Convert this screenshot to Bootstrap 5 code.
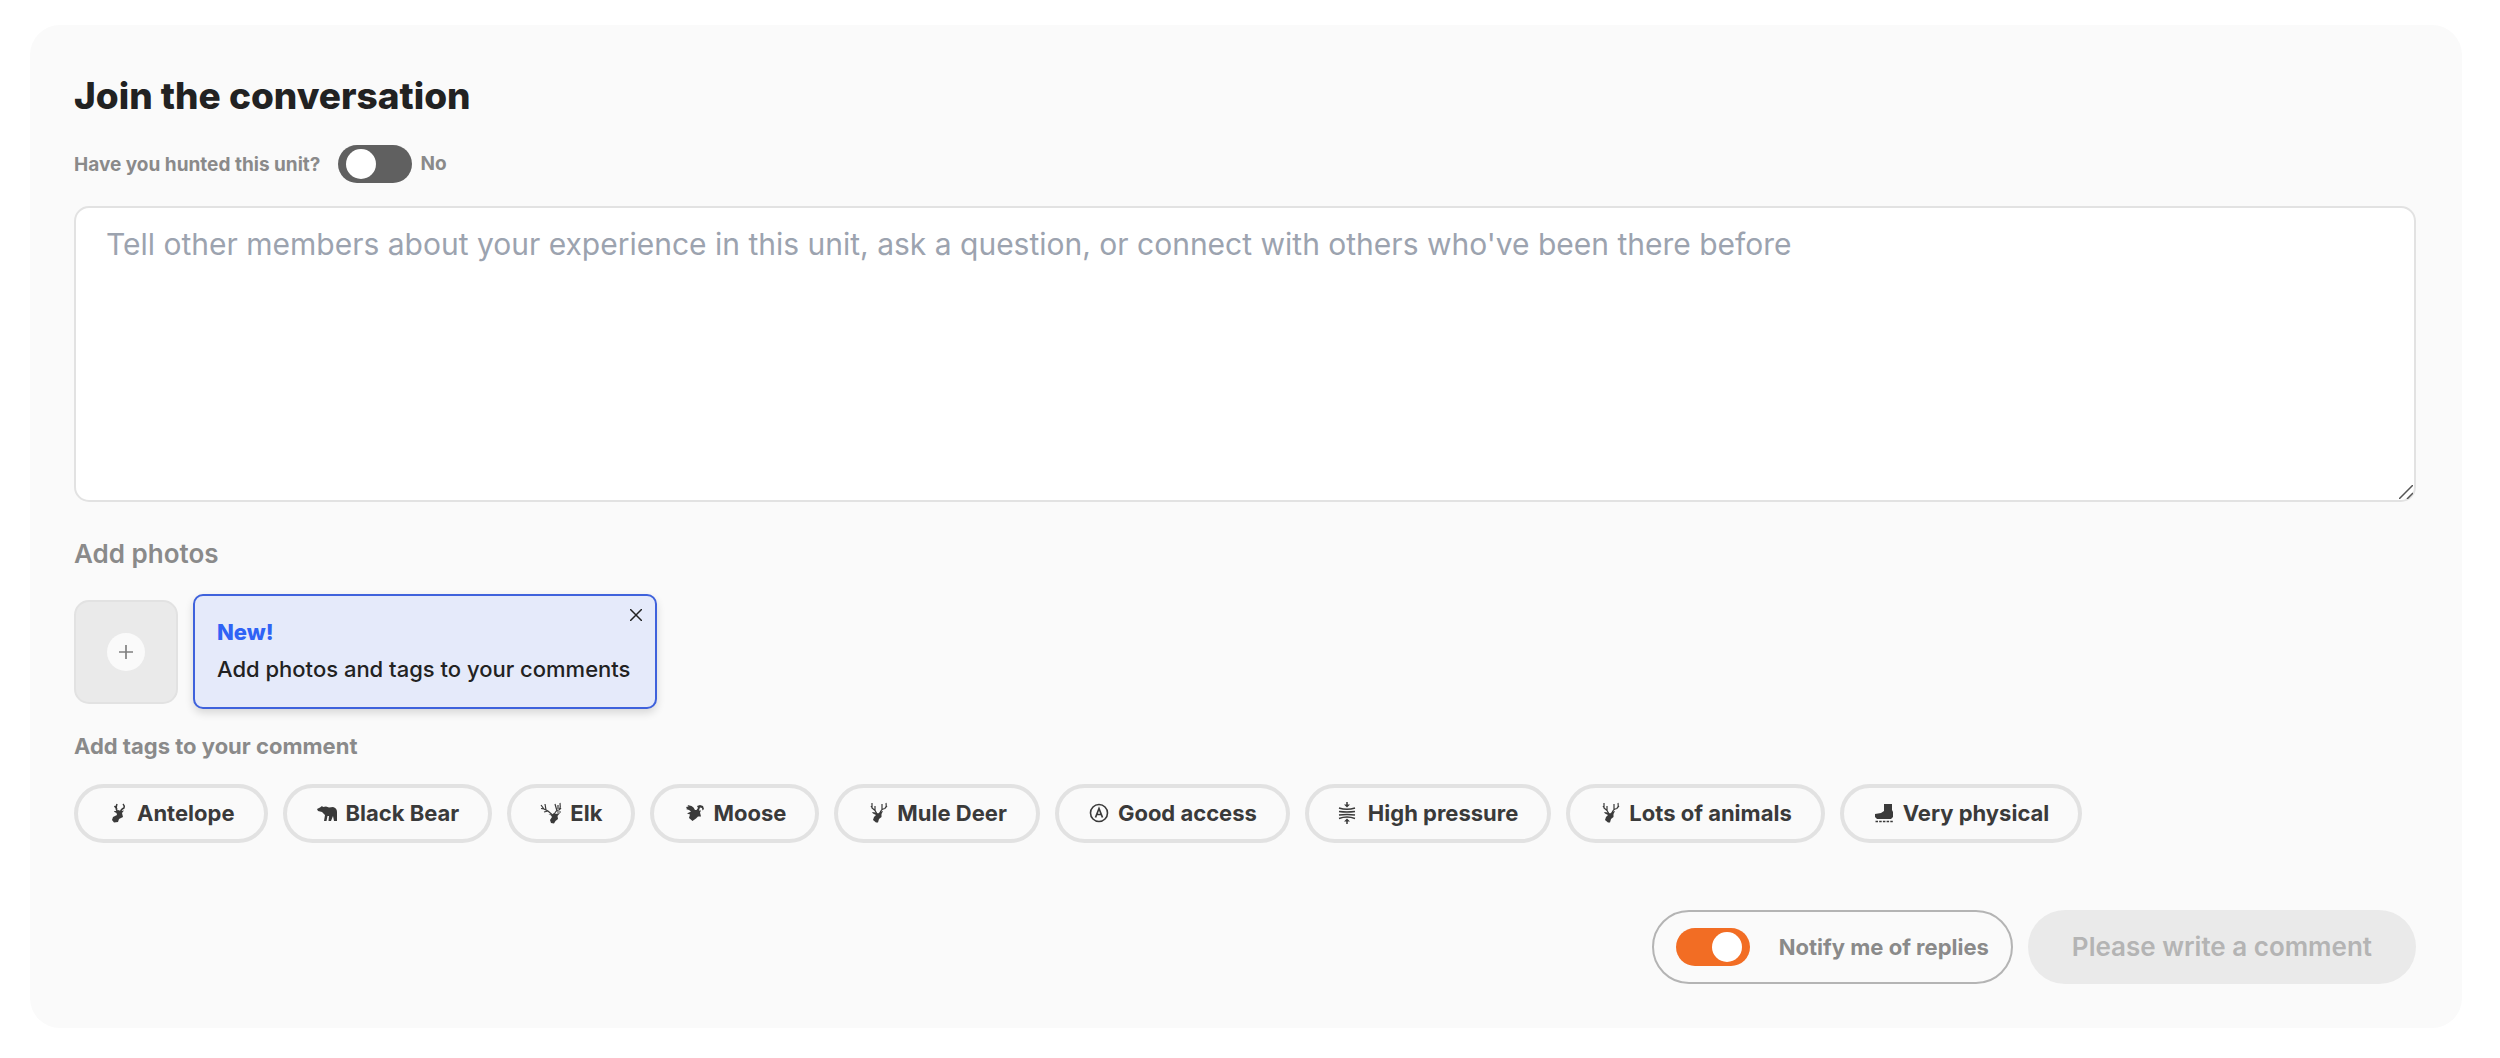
<!DOCTYPE html>
<html lang="en">
<head>
<meta charset="utf-8">
<meta name="viewport" content="width=device-width, initial-scale=1">
<title>Join the conversation</title>
<link rel="stylesheet" href="https://cdn.jsdelivr.net/npm/bootstrap@5.3.0/dist/css/bootstrap.min.css">
<style>
body { font-family: Inter, "Liberation Sans", sans-serif; font-size: 22px; line-height: 30px; color: #222; background: #fff; padding: 25px 38px 30px 30px; }
.talk-panel { background: #fafafa; border-radius: 30px; padding: 45px 46px 44px 44px; }
.talk-title { font-size: 37px; line-height: 52px; font-weight: 800; color: #222; margin-bottom: 22px; }
.muted-label { color: #8a8a8a; font-weight: 700; }
.ask-row { font-size: 19px; line-height: 38px; margin-bottom: 22px; }
.ask-row label { padding: 2px 2px 0 0; }
.switch-track { appearance: none; flex: none; width: 74px; height: 38px; margin: 0; border-radius: 19px; background: #606060; display: flex; align-items: center; padding: 0 8px; cursor: pointer; }
.switch-track::before { content: ""; width: 30px; height: 30px; border-radius: 50%; background: #fff; }
.switch-track:checked { background: #f26d24; justify-content: flex-end; }
.talk-box.form-control { height: 296px; border: 2px solid #e2e2e2; border-radius: 15px; padding: 14px 30px; font-size: 30px; line-height: 44px; background: #fff; resize: vertical; }
.talk-box.form-control::placeholder { color: #9ca3af; }
.talk-box::-webkit-resizer { display: none; }
.resize-mark { right: 3px; bottom: 3px; pointer-events: none; }
.photos-title { font-size: 26px; line-height: 36px; font-weight: 600; margin: 34px 0 22px; }
.photo-add { width: 104px; height: 104px; border: 2px solid #e2e2e2; border-radius: 15px; background: #eaeaea; padding: 0; }
.photo-add span { width: 38px; height: 38px; background: #fafafa; }
.news-box { border: 2px solid #3f62dc; border-radius: 10px; background: #e5eafa; padding: 18px 25px 19px 22px; box-shadow: 0 4px 8px rgba(0,0,0,.14); font-weight: 500; line-height: 37px; }
.news-box strong { color: #2f63f5; font-weight: 800; }
.news-close { top: 10px; right: 10px; width: 18px; height: 18px; line-height: 0; border: 0; background: none; padding: 0; }
.tags-title { font-size: 22px; line-height: 30px; margin: 22px 0 23px; }
.tag-pill { height: 59px; border: 4px solid #e2e2e2; border-radius: 30px; background: #fafafa; color: #3a3a3a; font-weight: 700; font-size: 22px; padding: 0 29px 2px; }
.tag-pill svg { width: 24px; height: 24px; margin-right: 6px; }
.gap-15 { gap: 15px; }
.foot-row { margin-top: 67px; }
.notify-box { height: 74px; border: 2px solid #b4b4b4; border-radius: 37px; padding: 0 22px; gap: 29px; }
.send-btn { height: 74px; border: 0; border-radius: 37px; background: #eaeaea; color: #b4b4b4; font-weight: 600; font-size: 26px; padding: 0 44px; }
</style>
<script src="https://cdn.jsdelivr.net/npm/bootstrap@5.3.0/dist/js/bootstrap.bundle.min.js"></script>
</head>
<body>
<svg class="d-none">
<symbol id="antelope" viewBox="0 0 24 24"><path d="M11 11Q8 8 10 3M10 8 7.500 5M13.500 11Q14 8 17 7 18 5 16 3" fill="none" stroke="currentColor" stroke-width="1.500"/><path d="m7 10 3 0 1-1 3 1 3-.500-2 2.500 1 4-4 2-1 3-4 .500-2-2.500 1-3 4-2-.500-2-2-1Z" fill="currentColor"/></symbol>
<symbol id="bear" viewBox="0 0 24 24"><path d="m1 8 3-1.500L6 5l1 1 3-.500 3 1 4-.500q4 1 4 5v9h-3l-1-5-2 5h-2.500l.500-5-1.500 0-1 5H8l1-6-3-3-2-.500L2 10Z" fill="currentColor"/></symbol>
<symbol id="elk" viewBox="0 0 24 24"><path d="M12.500 14 8 10 4 8 1 4M4 8 1 7.500M6 9 5 3M8 10 4 11M14.500 13Q16 9 19 9 21 6 20 2M19 9l2-2M17 10 15 3M18 8V4M17 11l4 0" fill="none" stroke="currentColor" stroke-width="1.200"/><path d="m8.500 13 3.500.500 2-1.500 1.500 1 4.500-1-2.500 3 .500 3-2.500 2-1.500 2.500L11 22l-1-3 2-3-1-1.500Z" fill="currentColor"/></symbol>
<symbol id="moose" viewBox="0 0 24 24"><path d="m3 6 2.500-.500-1-1.500 4 1 2 1.500L12 9l1.500 0L15 7l-1-2 3-1 3 1 1 3-1.500 1.500L19 7l-2-.500-1 3 2 0-1 2 1 4-3 0-2 2-3.500 2.500-3.500-3 1-3.500-3-1 4-2-2-1.500-3-1 1-.500Z" fill="currentColor"/></symbol>
<symbol id="deer" viewBox="0 0 24 24"><path d="M10 13 8 9.500 5 7 5 2M6 8 4 5M8 9.500V5M13 12Q14 8 18 7.500 20 5 19 2M18 7l2-2M15 9V3" fill="none" stroke="currentColor" stroke-width="1.200"/><path d="m5 11 4 .500 2 1 3-2 2-.500-1.500 3 0 3-2.500 2-1 3.500H9L6 19l1-3 2-2-3-1.500Z" fill="currentColor"/></symbol>
<symbol id="access" viewBox="0 0 24 24"><circle cx="11" cy="12" r="8.500" fill="none" stroke="currentColor" stroke-width="1.600"/><path d="m7.500 16.500 3.500-9 3.500 9M9 13.500h4" fill="none" stroke="currentColor" stroke-width="1.700"/></symbol>
<symbol id="pressure" viewBox="0 0 24 24"><path d="M9 1v4M9 23v-4M1 7q8 2.500 16 0M1 10.500q8 1 16 0M1 14q8-1 16 0M1 17.500q8-3 16 0" fill="none" stroke="currentColor" stroke-width="1.500"/><path d="M6 3.500h6L9 6.500ZM6 20.500h6L9 17.500Z" fill="currentColor"/></symbol>
<symbol id="boot" viewBox="0 0 24 24"><path d="M11 3h8v6l1 2v5l-2 2H4l-2-2v-3l6-1 3-2Z" fill="currentColor"/><path d="M2.500 20.500h17.500" fill="none" stroke="currentColor" stroke-width="1.500" stroke-dasharray="2.500 1.200"/></symbol>
</svg>
<main class="talk-panel">
<h1 class="talk-title">Join the conversation</h1>
<div class="ask-row muted-label d-flex align-items-center">
<label for="hunted" class="me-3">Have you hunted this unit?</label>
<input class="switch-track me-2" type="checkbox" role="switch" id="hunted"><span>No</span>
</div>
<div class="position-relative">
<textarea class="talk-box form-control" aria-label="Comment" placeholder="Tell other members about your experience in this unit, ask a question, or connect with others who've been there before"></textarea>
<svg class="resize-mark position-absolute" width="14" height="14" viewBox="0 0 14 14" stroke="#555" stroke-width="1.500"><path d="M0 14 14 0M8 14l6-6"/></svg>
</div>
<h2 class="photos-title muted-label">Add photos</h2>
<div class="d-flex align-items-center gap-15">
<button class="photo-add d-flex align-items-center justify-content-center" type="button" aria-label="Add a photo"><span class="rounded-circle d-flex align-items-center justify-content-center"><svg width="14" height="14" viewBox="0 0 14 14" stroke="#808080" stroke-width="1.700"><path d="M7 0v14M0 7h14"/></svg></span></button>
<div class="news-box position-relative"><strong class="d-block">New!</strong>Add photos and tags to your comments
<button class="news-close position-absolute" type="button" aria-label="Close"><svg width="12" height="12" viewBox="0 0 12 12" stroke="#222" stroke-width="1.500"><path d="m0 0 12 12M12 0 0 12"/></svg></button></div>
</div>
<h3 class="tags-title muted-label">Add tags to your comment</h3>
<div class="d-flex flex-wrap gap-15">
<button class="tag-pill d-flex align-items-center" type="button"><svg><use href="#antelope"/></svg>Antelope</button>
<button class="tag-pill d-flex align-items-center" type="button"><svg><use href="#bear"/></svg>Black Bear</button>
<button class="tag-pill d-flex align-items-center" type="button"><svg><use href="#elk"/></svg>Elk</button>
<button class="tag-pill d-flex align-items-center" type="button"><svg><use href="#moose"/></svg>Moose</button>
<button class="tag-pill d-flex align-items-center" type="button"><svg><use href="#deer"/></svg>Mule Deer</button>
<button class="tag-pill d-flex align-items-center" type="button"><svg><use href="#access"/></svg>Good access</button>
<button class="tag-pill d-flex align-items-center" type="button"><svg><use href="#pressure"/></svg>High pressure</button>
<button class="tag-pill d-flex align-items-center" type="button"><svg><use href="#deer"/></svg>Lots of animals</button>
<button class="tag-pill d-flex align-items-center" type="button"><svg><use href="#boot"/></svg>Very physical</button>
</div>
<div class="foot-row d-flex flex-wrap justify-content-end gap-15">
<label class="notify-box muted-label d-flex align-items-center"><input class="switch-track" type="checkbox" role="switch" checked>Notify me of replies</label>
<button class="send-btn" type="submit" disabled>Please write a comment</button>
</div>
</main>
</body>
</html>
